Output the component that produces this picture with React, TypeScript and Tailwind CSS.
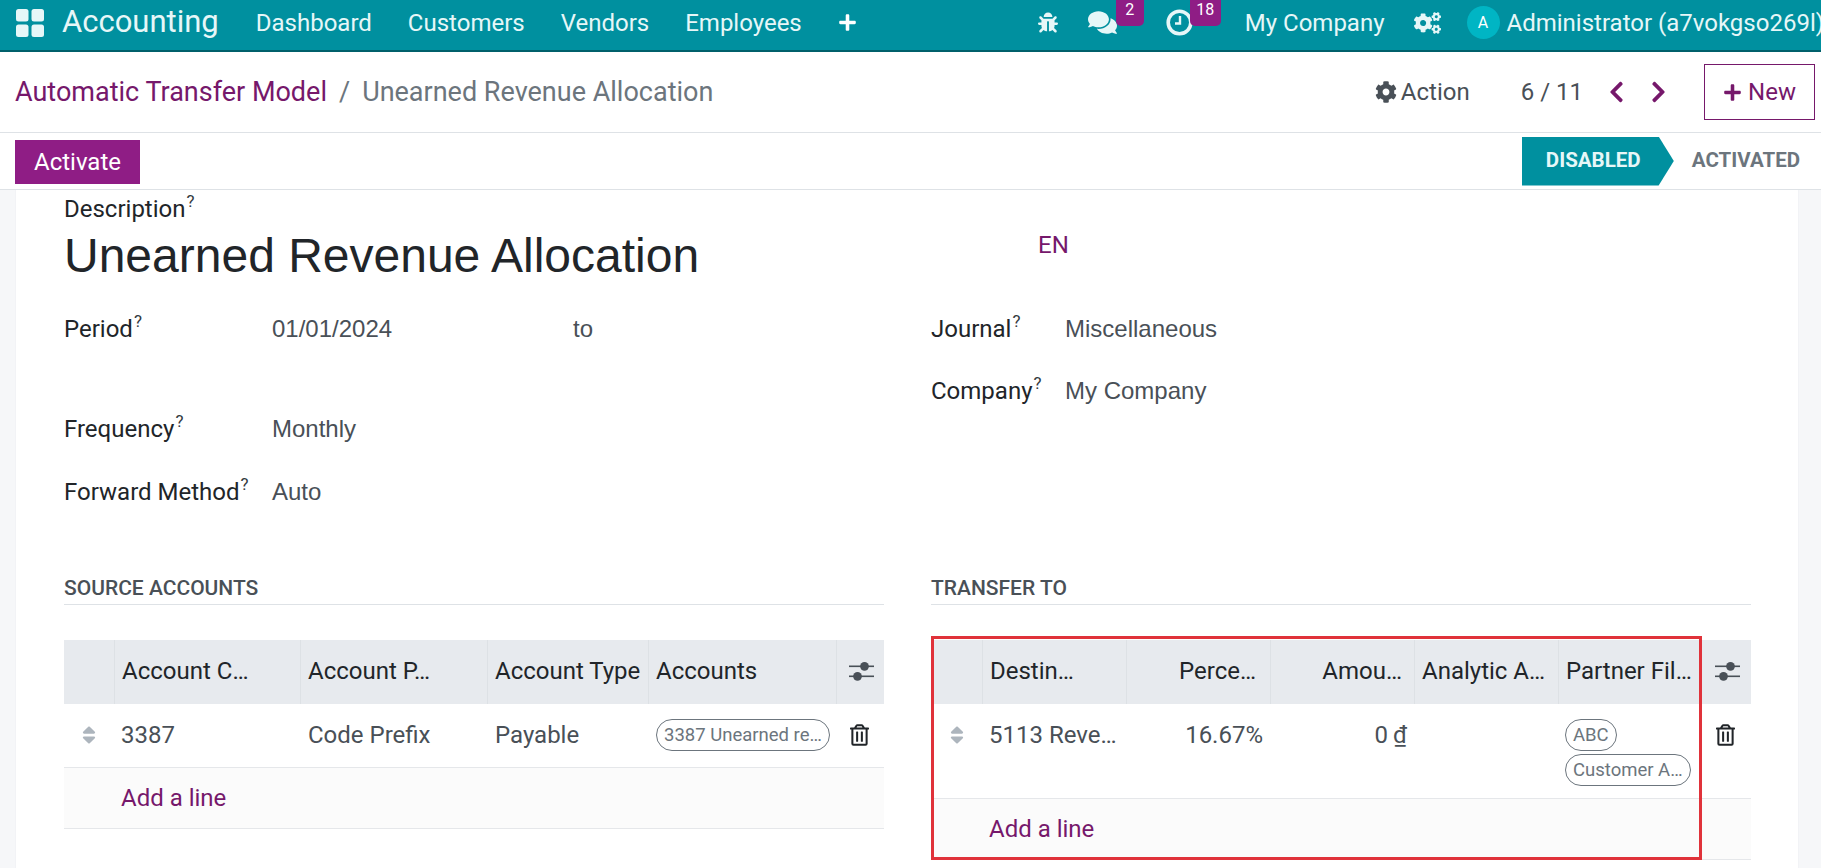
import type { ReactNode } from "react";
import { FaBug, FaChevronLeft, FaChevronRight, FaCog, FaCogs, FaComments, FaPlus, FaRegTrashAlt, FaSort } from "react-icons/fa";

function AppsIcon() {
  return (
    <svg viewBox="0 0 30 30" className="w-[30px] h-[30px]" fill="#e6f7f8">
      <rect x="1" y="1" width="12.5" height="12.5" rx="2.5" />
      <rect x="16.5" y="1" width="12.5" height="12.5" rx="2.5" />
      <rect x="1" y="16.5" width="12.5" height="12.5" rx="2.5" />
      <rect x="16.5" y="16.5" width="12.5" height="12.5" rx="2.5" />
    </svg>
  );
}

function ClockIcon() {
  return (
    <svg viewBox="0 0 27 27" className="w-[27px] h-[27px]" fill="none" stroke="#e6f7f8">
      <circle cx="13.5" cy="13.5" r="11.3" strokeWidth="3.6" />
      <path d="M14 7v7.5H9" strokeWidth="2.4" />
    </svg>
  );
}

function SlidersIcon() {
  return (
    <svg viewBox="0 0 25 21" className="w-[25px] h-[21px]" fill="#495057">
      <rect x="0" y="4.5" width="25" height="1.6" />
      <rect x="0" y="14.5" width="25" height="1.6" />
      <circle cx="15.5" cy="5.3" r="4.4" />
      <circle cx="8.5" cy="15.3" r="4.4" />
    </svg>
  );
}

function Badge({ children, className }: { children: ReactNode; className: string }) {
  return (
    <span className={`absolute top-[-10px] h-[27px] rounded-b-[5px] bg-[#8f1d85] text-white text-[16px] leading-[21px] text-center ${className}`}>
      {children}
    </span>
  );
}

function Navbar() {
  return (
    <header className="h-[52px] shrink-0 flex items-center pb-[5px] bg-[#00909f] border-b-2 border-[#00606b] text-[#e6f7f8] text-[24px] whitespace-nowrap overflow-hidden">
      <div className="ml-[15px] shrink-0"><AppsIcon /></div>
      <div className="ml-[17px] text-[31px]">Accounting</div>
      <nav className="ml-[37px] flex items-center gap-[36px]">
        <span>Dashboard</span>
        <span>Customers</span>
        <span>Vendors</span>
        <span>Employees</span>
        <FaPlus className="w-[19px] h-[19px] text-white" />
      </nav>
      <div className="ml-[181px] flex items-center shrink-0">
        <FaBug className="w-[20px] h-[21px]" />
        <div className="relative ml-[30px]">
          <FaComments className="w-[29px] h-[27px]" />
          <Badge className="left-[28px] w-[28px]">2</Badge>
        </div>
        <div className="relative ml-[49px]">
          <ClockIcon />
          <Badge className="left-[24px] w-[31px]">18</Badge>
        </div>
        <span className="ml-[52px]">My Company</span>
        <FaCogs className="ml-[29px] w-[27px] h-[24px]" />
        <span className="ml-[26px] w-[33px] h-[33px] rounded-full bg-[#00b5c4] flex items-center justify-center text-[16px] text-white">A</span>
        <span className="ml-[7px]">Administrator (a7vokgso269l)</span>
      </div>
    </header>
  );
}

function Toolbar() {
  return (
    <div className="h-[81px] shrink-0 flex items-center border-b border-[#dee2e6] text-[24px] whitespace-nowrap">
      <div className="ml-[15px] flex items-center text-[27px]">
        <span className="text-[#76186b]">Automatic Transfer Model</span>
        <span className="ml-[12px] text-[#6c757d]">/</span>
        <span className="ml-[12px] text-[#6c757d]">Unearned Revenue Allocation</span>
      </div>
      <div className="ml-auto flex items-center text-[#495057]">
        <FaCog className="w-[22px] h-[22px]" />
        <span className="ml-[4px]">Action</span>
        <span className="ml-[51px]">6 / 11</span>
        <FaChevronLeft className="ml-[26px] w-[15px] h-[24px] text-[#76186b]" />
        <FaChevronRight className="ml-[27px] w-[15px] h-[24px] text-[#76186b]" />
        <button className="ml-[38px] mr-[6px] w-[111px] h-[56px] flex items-center justify-center gap-[6px] border border-[#76186b] text-[#76186b]">
          <FaPlus className="w-[19px] h-[19px]" />
          New
        </button>
      </div>
    </div>
  );
}

function StatusBar() {
  return (
    <div className="h-[57px] shrink-0 flex items-center justify-between border-b border-[#dee2e6] whitespace-nowrap">
      <button className="ml-[15px] mt-[2px] w-[125px] h-[44px] bg-[#8f1d85] text-white text-[24px]">Activate</button>
      <div className="flex items-center h-[49px] text-[20.5px] font-bold">
        <div className="w-[152px] h-full pl-[24px] pb-[2px] flex items-center bg-[#00909f] text-[#e6f7f8] [clip-path:polygon(0_0,90%_0,100%_50%,90%_100%,0_100%)]">DISABLED</div>
        <div className="ml-[18px] mr-[21px] pb-[2px] text-[#6c757d]">ACTIVATED</div>
      </div>
    </div>
  );
}

function Label({ children }: { children: ReactNode }) {
  return (
    <span className="text-[#212529]">
      {children}
      <sup className="ml-[1px] text-[17px] text-[#343a40] top-[-10px]">?</sup>
    </span>
  );
}

function Field({ label, children, className, labelWidth }: { label: string; children?: ReactNode; className: string; labelWidth: string }) {
  return (
    <div className={`flex items-start ${className}`}>
      <div className={`shrink-0 ${labelWidth}`}><Label>{label}</Label></div>
      <div className="flex-1 text-[#495057] font-['Liberation_Sans',sans-serif]">{children}</div>
    </div>
  );
}

function Section({ title }: { title: string }) {
  return (
    <div className="h-[37px] pt-[5px] border-b border-[#dee2e6] text-[21px] font-medium text-[#495057] uppercase">{title}</div>
  );
}

function Pill({ children }: { children: ReactNode }) {
  return (
    <span className="h-[32px] w-fit px-[7px] flex items-center rounded-[16px] border border-[#6c757d] text-[18.5px] text-[#6c757d] whitespace-nowrap">
      {children}
    </span>
  );
}

function HeadCell({ children, right, className = "" }: { children?: ReactNode; right?: boolean; className?: string }) {
  return (
    <div className={`flex items-center pl-[7px] pb-[2px] border-l border-[#dde1e5] first:border-l-0 whitespace-nowrap ${right ? "justify-end" : ""} ${className}`}>
      {children}
    </div>
  );
}

function RowHandle() {
  return (
    <div className="h-[62px] flex items-center justify-center">
      <FaSort className="w-[20px] h-[22px] text-[#adb5bd]" />
    </div>
  );
}

function Trash() {
  return (
    <div className="h-[62px] flex items-center justify-center pr-[1px]">
      <FaRegTrashAlt className="w-[19px] h-[22px] text-[#212529]" />
    </div>
  );
}

function SourceTable() {
  const cols = "grid-cols-[50px_186px_187px_161px_188px_48px]";
  return (
    <div className="mt-[35px]">
      <div className={`grid ${cols} h-[64px] bg-[#e7eaee] text-[#212529]`}>
        <HeadCell />
        <HeadCell>Account C…</HeadCell>
        <HeadCell>Account P…</HeadCell>
        <HeadCell>Account Type</HeadCell>
        <HeadCell>Accounts</HeadCell>
        <HeadCell className="justify-center pl-0 pb-0 pr-[5px]"><SlidersIcon /></HeadCell>
      </div>
      <div className={`grid ${cols} h-[64px] border-b border-[#e5e7ea] text-[#495057]`}>
        <RowHandle />
        <div className="h-[62px] flex items-center px-[7px]">3387</div>
        <div className="h-[62px] flex items-center px-[8px]">Code Prefix</div>
        <div className="h-[62px] flex items-center px-[8px]">Payable</div>
        <div className="pl-[8px] pt-[15px]"><Pill>3387 Unearned re…</Pill></div>
        <Trash />
      </div>
      <div className="h-[61px] pl-[57px] flex items-center border-b border-[#e5e7ea] bg-[#fbfbfb] text-[#76186b]">
        Add a line
      </div>
    </div>
  );
}

function TransferTable() {
  const cols = "grid-cols-[51px_144px_144px_144px_144px_143px_50px]";
  return (
    <div className="relative mt-[35px]">
      <div className={`grid ${cols} h-[64px] bg-[#e7eaee] text-[#212529]`}>
        <HeadCell />
        <HeadCell>Destin…</HeadCell>
        <HeadCell right className="pr-[14px]">Perce…</HeadCell>
        <HeadCell right className="pr-[12px]">Amou…</HeadCell>
        <HeadCell>Analytic A…</HeadCell>
        <HeadCell>Partner Fil…</HeadCell>
        <HeadCell className="justify-center pl-0 pb-0 pr-[5px]"><SlidersIcon /></HeadCell>
      </div>
      <div className={`grid ${cols} h-[95px] border-b border-[#e5e7ea] text-[#495057]`}>
        <RowHandle />
        <div className="h-[62px] flex items-center px-[7px] whitespace-nowrap">5113 Reve…</div>
        <div className="h-[62px] flex items-center justify-end px-[7px]">16.67%</div>
        <div className="h-[62px] flex items-center justify-end px-[7px] gap-[5px]">0 <span className="underline">₫</span></div>
        <div />
        <div className="pl-[7px] pt-[15px] flex flex-col gap-[3px]">
          <Pill>ABC</Pill>
          <Pill>Customer A…</Pill>
        </div>
        <Trash />
      </div>
      <div className="h-[61px] pl-[58px] flex items-center border-b border-[#e5e7ea] bg-[#fbfbfb] text-[#76186b]">Add a line</div>
      <div className="absolute left-0 top-[-4px] w-[771px] h-[224px] border-[3px] border-[#e0323a] pointer-events-none" />
    </div>
  );
}

export default function App() {
  return (
    <div className="h-[868px] flex flex-col overflow-hidden bg-white font-['Roboto',sans-serif]">
      <Navbar />
      <Toolbar />
      <StatusBar />
      <main className="flex-1 min-h-0 bg-[#f6f7f9] pl-[16px] pr-[23px]">
        <div className="h-full bg-white pl-[48px] pr-[47px] text-[24px] leading-[30px] shadow-[0_0_1px_#dee2e6]">
          <div className="pt-[4px]"><Label>Description</Label></div>
          <div className="flex items-start">
            <h1 className="w-[974px] shrink-0 text-[48px] leading-[56px] mt-[4px] text-[#212529] font-['Liberation_Sans',sans-serif]">Unearned Revenue Allocation</h1>
            <span className="mt-[6px] text-[#76186b]">EN</span>
          </div>
          <div className="grid grid-cols-[820px_820px] gap-x-[47px] mt-[30px]">
            <div>
              <Field label="Period" labelWidth="w-[208px]" className="h-[100px]">
                <div className="flex"><span className="w-[301px]">01/01/2024</span><span>to</span></div>
              </Field>
              <Field label="Frequency" labelWidth="w-[208px]" className="h-[63px]">Monthly</Field>
              <Field label="Forward Method" labelWidth="w-[208px]" className="h-[63px]">Auto</Field>
            </div>
            <div>
              <Field label="Journal" labelWidth="w-[134px]" className="h-[62px]">Miscellaneous</Field>
              <Field label="Company" labelWidth="w-[134px]" className="h-[62px]">My Company</Field>
            </div>
          </div>
          <div className="grid grid-cols-[820px_820px] gap-x-[47px] mt-[28px]">
            <div>
              <Section title="Source Accounts" />
              <SourceTable />
            </div>
            <div>
              <Section title="Transfer To" />
              <TransferTable />
            </div>
          </div>
        </div>
      </main>
    </div>
  );
}
